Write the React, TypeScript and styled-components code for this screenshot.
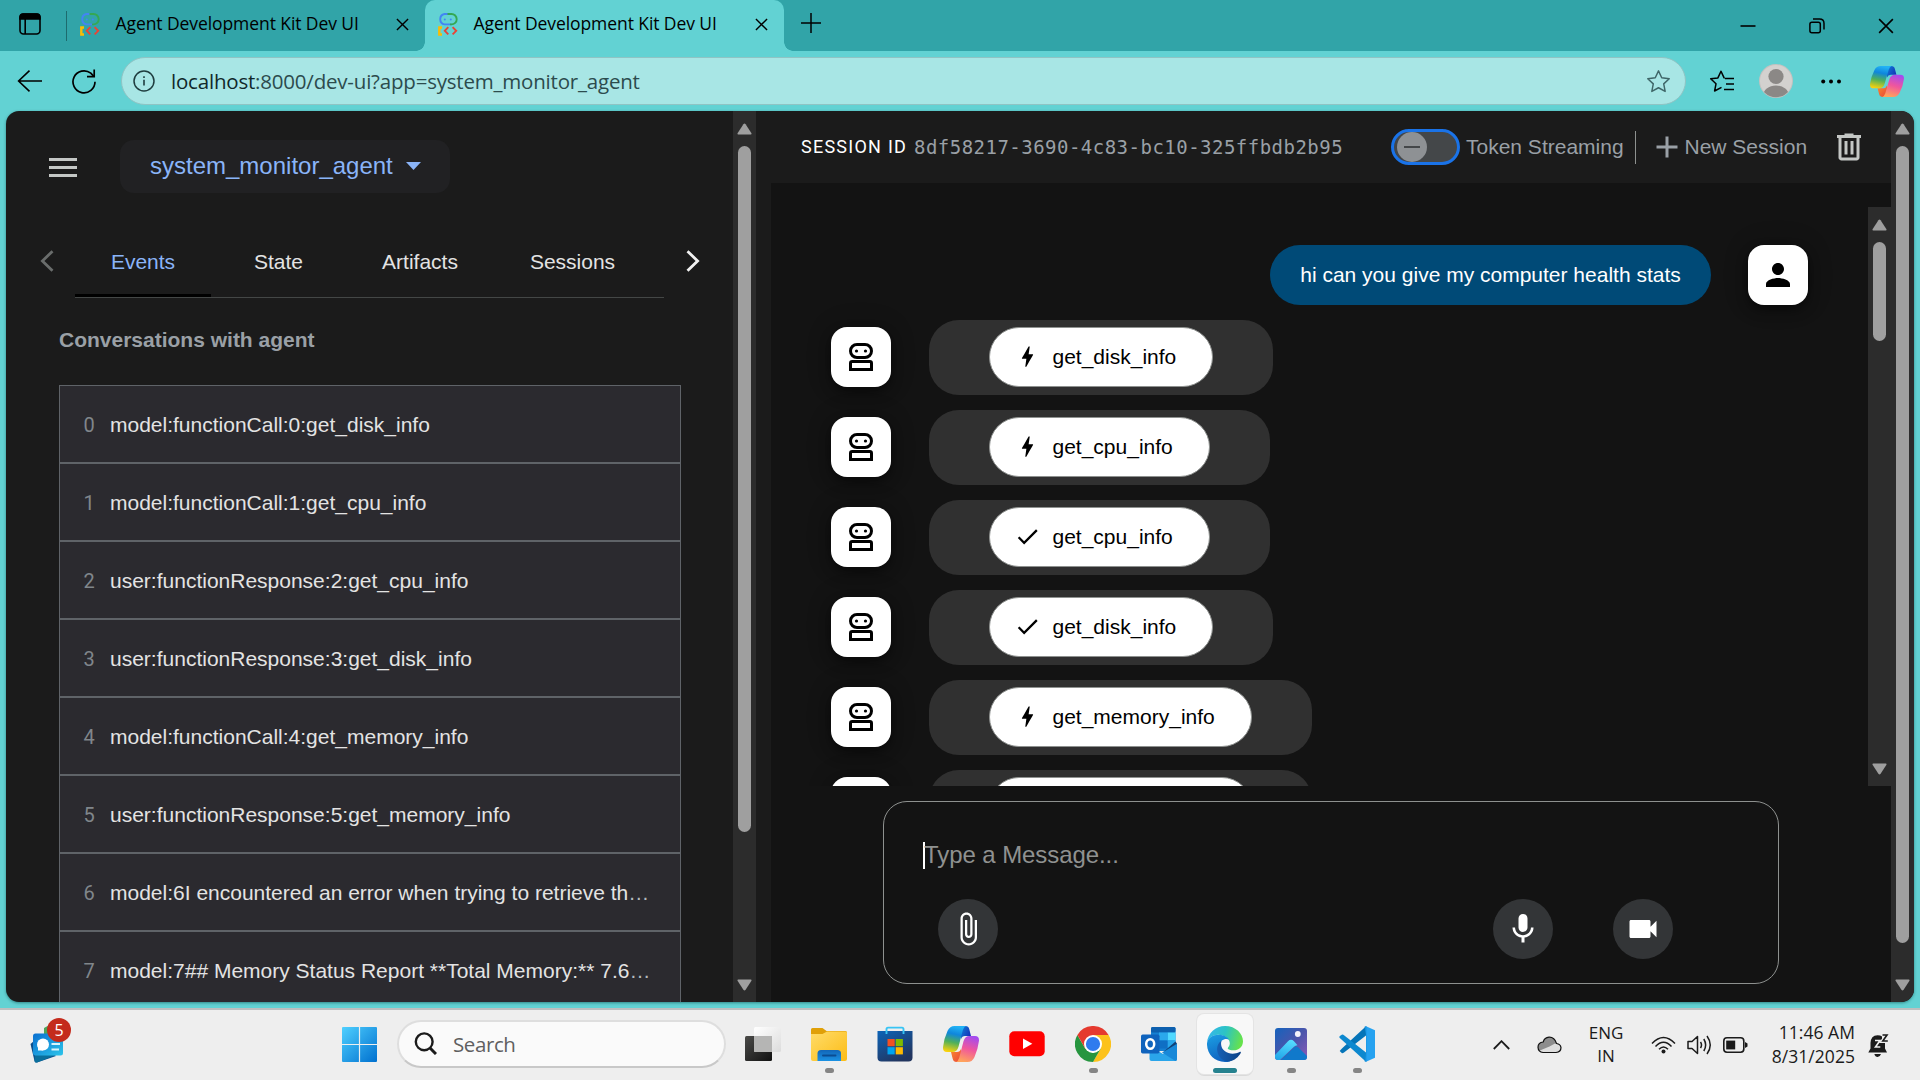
import React from "react";
import styled, { createGlobalStyle, css } from "styled-components";

const ui = `"Segoe UI", "Open Sans", "Noto Sans", sans-serif`;
const arial = `"Liberation Sans", Arial, sans-serif`;

const Global = createGlobalStyle`
  * { box-sizing: border-box; }
  html, body { margin: 0; padding: 0; overflow: hidden; background: #62d2d3; }
  svg { display: block; flex: none; }
`;

const Screen = styled.div`
  width: 1920px;
  height: 1080px;
  display: flex;
  flex-direction: column;
  background: #62d2d3;
  font-family: ${arial};
  overflow: hidden;
  white-space: nowrap;
`;

/* ---------- browser chrome ---------- */

const TabStrip = styled.div`
  height: 51px;
  flex: none;
  display: flex;
  align-items: stretch;
  background: #31a4a8;
  font-family: ${ui};
  color: #0b1a1b;
`;

const TabOverview = styled.div`
  width: 66px;
  padding-left: 19px;
  padding-bottom: 3px;
  display: flex;
  align-items: center;
`;

const StripDivider = styled.div`
  width: 1px;
  height: 30px;
  margin-top: 11px;
  background: #1d6b6e;
`;

const Tab = styled.div<{ $active?: boolean; $width: number }>`
  width: ${(p) => p.$width}px;
  padding: 0 16px 2px 13px;
  display: flex;
  align-items: center;
  position: relative;
  ${(p) =>
    p.$active &&
    css`
      background: #62d2d3;
      border-radius: 10px 10px 0 0;
      &::before,
      &::after {
        content: "";
        position: absolute;
        bottom: 0;
        width: 9px;
        height: 9px;
      }
      &::before {
        left: -9px;
        background: radial-gradient(circle at 0 0, transparent 8.5px, #62d2d3 9px);
      }
      &::after {
        right: -9px;
        background: radial-gradient(circle at 100% 0, transparent 8.5px, #62d2d3 9px);
      }
    `}
`;

const TabTitle = styled.span`
  margin-left: 15.5px;
  flex: 1;
  font-size: 17.5px;
  letter-spacing: -0.08px;
  line-height: 24px;
  color: #000;
  padding-bottom: 3px;
`;

const NewTab = styled.div`
  padding: 0 0 5px 17px;
  display: flex;
  align-items: center;
`;

const WindowControls = styled.div`
  margin-left: auto;
  padding-right: 26px;
  display: flex;
  align-items: center;
  gap: 53px;
`;

const Toolbar = styled.div`
  height: 60px;
  flex: none;
  display: flex;
  align-items: center;
  padding: 0 14px 0 17px;
`;

const Address = styled.div`
  width: 1565px;
  height: 48px;
  flex: none;
  margin-left: 25px;
  margin-right: 23px;
  padding: 0 14px 0 11px;
  display: flex;
  align-items: center;
  border: 1.5px solid #8fc4c4;
  border-radius: 24px;
  background: #a8e6e5;
  font-family: ${ui};
`;

const Url = styled.span`
  margin-left: 16px;
  flex: 1;
  font-size: 20.5px;
  letter-spacing: -0.2px;
  line-height: 28px;
  padding-bottom: 1px;
  color: #2c4b4d;
  b { font-weight: 400; color: #10282a; }
`;

const ToolIcons = styled.div`
  display: flex;
  align-items: center;
  gap: 28px;
  svg:first-child { margin-right: -4px; }
`;

/* ---------- page ---------- */

const Page = styled.div`
  height: 891px;
  flex: none;
  margin: 0 6px;
  display: flex;
  background: #1b1b1b;
  border-radius: 13px;
  overflow: hidden;
  box-shadow: 0 1px 3px rgba(0, 60, 60, 0.5);
`;

const Sidebar = styled.div`
  width: 727px;
  flex: none;
  overflow: hidden;
  display: flex;
  flex-direction: column;
`;

const SideHeader = styled.div`
  display: flex;
  align-items: center;
  padding: 28px 0 0 43px;
  height: 83px;
  flex: none;
  & > svg { margin-top: 2px; }
`;

const AgentSelect = styled.div`
  width: 330px;
  height: 53px;
  margin-left: 43px;
  padding: 0 29px 1px 30px;
  display: flex;
  align-items: center;
  justify-content: space-between;
  border-radius: 14px;
  background: #212123;
  color: #8ab4f8;
  font-size: 24px;
  line-height: 30px;
`;

const TabBar = styled.div`
  height: 72px;
  margin-top: 32px;
  display: flex;
  align-items: stretch;
`;

const Pager = styled.div<{ $left: number }>`
  padding-left: ${(p) => p.$left}px;
  padding-top: 24px;
`;

const TabList = styled.div`
  width: 589px;
  margin-left: 21px;
  display: flex;
  border-bottom: 1px solid #444746;
`;

const SideTab = styled.div<{ $active?: boolean; $width: number }>`
  width: ${(p) => p.$width}px;
  height: 71px;
  padding-top: 3px;
  display: flex;
  align-items: center;
  justify-content: center;
  font-size: 21px;
  color: ${(p) => (p.$active ? "#8ab4f8" : "#e3e3e3")};
  border-bottom: 3px solid ${(p) => (p.$active ? "#000" : "transparent")};
`;

const SideHeading = styled.div`
  margin: 30px 0 0 53px;
  font-size: 21px;
  line-height: 24px;
  font-weight: 700;
  color: #9aa0a6;
`;

const EventList = styled.div`
  width: 622px;
  margin: 33px 0 0 53px;
  flex: none;
`;

const EventRow = styled.div`
  height: 78px;
  display: flex;
  align-items: center;
  padding: 2px 28px 0 23px;
  border: 1px solid #5f6368;
  background: #2b2a2f;
  font-size: 21px;
  line-height: 30px;
`;

const EventIndex = styled.span`
  width: 27px;
  flex: none;
  padding-left: 0.5px;
  font-size: 20px;
  font-family: Roboto, sans-serif;
  color: #80868b;
`;

const EventTitle = styled.span`
  flex: 1;
  color: #b4b9be;
  span { color: #e3e3e3; }
`;

const Scroll = styled.div<{ $height: number }>`
  width: 23px;
  height: ${(p) => p.$height}px;
  flex: none;
  padding: 12px 0 11px;
  display: flex;
  flex-direction: column;
  align-items: center;
  background: #2c2c2c;
`;

const Thumb = styled.div<{ $height: number }>`
  width: 13px;
  height: ${(p) => p.$height}px;
  margin-top: 11px;
  margin-bottom: auto;
  border-radius: 7px;
  background: #9f9f9f;
`;

const Main = styled.div`
  width: 1120px;
  margin-left: 15px;
  flex: none;
  display: flex;
  flex-direction: column;
  background: #131313;
`;

const SessionBar = styled.div`
  height: 72px;
  flex: none;
  display: flex;
  align-items: center;
  padding: 0 24px 0 30px;
  background: #1b1b1b;
  color: #9aa0a6;
  font-size: 21px;
`;

const SessionLabel = styled.span`
  width: 113px;
  font-family: Roboto, sans-serif;
  font-size: 18px;
  font-weight: 400;
  letter-spacing: 1.25px;
  padding-bottom: 1px;
  color: #fff;
`;

const SessionId = styled.span`
  width: 477px;
  font-family: "DejaVu Sans Mono", monospace;
  font-size: 19px;
  letter-spacing: 0.48px;
`;

const Toggle = styled.div`
  width: 69px;
  height: 36px;
  padding: 0 3px;
  display: flex;
  align-items: center;
  border: 3px solid #1a73e8;
  border-radius: 18px;
  background: #444749;
`;

const Knob = styled.div`
  width: 30px;
  height: 30px;
  display: flex;
  align-items: center;
  justify-content: center;
  border-radius: 50%;
  background: #8e9194;
  &::after {
    content: "";
    width: 16px;
    height: 2px;
    background: #444749;
  }
`;

const BarText = styled.span<{ $left: number; $width: number }>`
  margin-left: ${(p) => p.$left}px;
  width: ${(p) => p.$width}px;
`;

const BarDivider = styled.div`
  width: 1px;
  height: 33px;
  margin-right: 12.5px;
  background: #8e918f;
`;

const TrashSlot = styled.div`
  margin-left: 25.5px;
`;

const ChatArea = styled.div`
  height: 579px;
  margin-top: 24px;
  flex: none;
  display: flex;
`;

const Messages = styled.div`
  flex: 1;
  height: 579px;
  overflow: hidden;
  padding: 38px 60px 0;
`;

const UserRow = styled.div`
  display: flex;
  justify-content: flex-end;
  align-items: center;
  margin-bottom: 15px;
`;

const Avatar = styled.div`
  width: 60px;
  height: 60px;
  flex: none;
  display: flex;
  align-items: center;
  justify-content: center;
  border-radius: 16px;
  background: #fff;
  box-shadow: 0 5px 12px rgba(0, 0, 0, 0.45), 0 0 26px rgba(0, 0, 0, 0.18);
`;

const UserBubble = styled.div`
  width: 441px;
  height: 60px;
  margin-right: 37px;
  display: flex;
  align-items: center;
  justify-content: center;
  border-radius: 30px;
  background: #004a77;
  color: #fff;
  font-size: 21px;
`;

const BotRow = styled.div`
  display: flex;
  align-items: flex-start;
  height: 75px;
  margin-bottom: 15px;
  ${Avatar} { margin-top: 7px; }
`;

const BotBubble = styled.div`
  height: 75px;
  margin-left: 38px;
  padding: 7px 60px 0;
  border-radius: 30px;
  background: #303030;
`;

const FnButton = styled.div`
  height: 60px;
  padding: 0 36px 1px 23.5px;
  display: flex;
  align-items: center;
  gap: 12px;
  border: 1px solid #8e918f;
  border-radius: 30px;
  background: #fff;
  color: #000;
  font-size: 21px;
`;

const Composer = styled.div`
  width: 896px;
  height: 183px;
  margin: 15px 0 0 112px;
  padding: 40px 105px 0 39px;
  border: 1px solid #8e918f;
  border-radius: 24px;
`;

const Prompt = styled.div`
  height: 27px;
  padding-bottom: 2px;
  display: flex;
  align-items: center;
  border-left: 2px solid #fff;
  color: #8f9190;
  font-size: 24px;
  line-height: 27px;
  letter-spacing: -0.08px;
  text-indent: -1px;
`;

const Actions = styled.div`
  display: flex;
  margin-top: 30px;
  padding-left: 15px;
`;

const RoundButton = styled.div<{ $push?: boolean }>`
  width: 60px;
  height: 60px;
  margin-left: ${(p) => (p.$push ? "auto" : "0")};
  display: flex;
  align-items: center;
  justify-content: center;
  border-radius: 50%;
  background: #333537;
  & + & + & { margin-left: 60px; }
`;

/* ---------- taskbar ---------- */

const Taskbar = styled.div`
  height: 72px;
  margin-top: 6px;
  display: flex;
  align-items: flex-start;
  background: #eeeeee;
  border-top: 2px solid #bdbfbf;
  font-family: ${ui};
  color: #1b1b1b;
`;

const Widgets = styled.div`
  width: 342px;
  padding: 8px 0 0 30px;
  position: relative;
`;

const Badge = styled.div`
  position: absolute;
  left: 47px;
  top: 8px;
  width: 24px;
  height: 24px;
  border-radius: 50%;
  background: #c42b1c;
  color: #fff;
  font-size: 16px;
  line-height: 24px;
  text-align: center;
`;

const WinLogo = styled.div`
  margin-top: 17px;
  width: 55px;
`;

const SearchBox = styled.div`
  width: 329px;
  height: 48px;
  margin-top: 10px;
  padding: 0 0 1px 15px;
  display: flex;
  align-items: center;
  gap: 16px;
  border: 2px solid #dedede;
  border-bottom-color: #c8c8c8;
  border-radius: 24px;
  background: #fafafa;
  color: #5f5f5f;
  font-size: 20.5px;
  line-height: 28px;
  letter-spacing: -0.4px;
`;

const Apps = styled.div`
  display: flex;
  gap: 10px;
  margin: 4px 0 0 9px;
`;

const AppSlot = styled.div<{ $active?: boolean }>`
  width: 56px;
  height: 60px;
  padding-top: 12px;
  display: flex;
  flex-direction: column;
  align-items: center;
  gap: 6px;
  ${(p) =>
    p.$active &&
    css`
      background: #f8f8f8;
      border-radius: 7px;
      box-shadow: 0 0 0 1px #e4e4e4, 0 2px 0 #dadada;
    `}
`;

const Running = styled.div<{ $active?: boolean }>`
  width: ${(p) => (p.$active ? 24 : 9)}px;
  height: 5px;
  border-radius: 3px;
  background: ${(p) => (p.$active ? "#26828f" : "#858585")};
`;

const Tray = styled.div`
  margin-left: auto;
  height: 70px;
  padding-right: 31px;
  display: flex;
  align-items: center;
  font-size: 17px;
  line-height: 23px;
`;

const Lang = styled.div`
  width: 38px;
  margin: -2px 26px 0 25px;
  text-align: center;
`;

const Clock = styled.div`
  width: 92px;
  margin-top: -3px;
  margin-left: 15px;
  margin-right: 13px;
  text-align: right;
  font-size: 17.5px;
  line-height: 24px;
  letter-spacing: 0.05px;
`;

const Spacer = styled.div<{ $w: number }>`
  width: ${(p) => p.$w}px;
  flex: none;
`;

/* ---------- icons ---------- */

const Mat = ({ d, size = 36, fill = "#000" }: { d: string; size?: number; fill?: string }) => (
  <svg width={size} height={size} viewBox="0 0 24 24" fill={fill}>
    <path d={d} />
  </svg>
);

const P = {
  person: "M12 12c2.21 0 4-1.79 4-4s-1.79-4-4-4-4 1.79-4 4 1.79 4 4 4zm0 2c-2.67 0-8 1.34-8 4v2h16v-2c0-2.66-5.33-4-8-4z",
  bolt: "M11 21h-1l1-7H7.5c-.58 0-.57-.32-.38-.66.19-.34.05-.08.07-.12C8.48 10.94 10.42 7.54 13 3h1l-1 7h3.5c.49 0 .56.33.47.51l-.07.15C12.96 17.55 11 21 11 21z",
  check: "M9 16.17 4.83 12l-1.42 1.41L9 19 21 7l-1.41-1.41z",
  clip: "M16.5 6v11.5c0 2.21-1.79 4-4 4s-4-1.79-4-4V5c0-1.38 1.12-2.5 2.5-2.5s2.5 1.12 2.5 2.5v10.5c0 .55-.45 1-1 1s-1-.45-1-1V6H10v9.5c0 1.38 1.12 2.5 2.5 2.5s2.5-1.12 2.5-2.5V5c0-2.21-1.79-4-4-4S7 2.79 7 5v12.5c0 3.04 2.46 5.5 5.5 5.5s5.5-2.46 5.5-5.5V6h-1.5z",
  mic: "M12 14c1.66 0 3-1.34 3-3V5c0-1.66-1.34-3-3-3S9 3.34 9 5v6c0 1.66 1.34 3 3 3zm5.3-3c0 3-2.54 5.1-5.3 5.1S6.7 14 6.7 11H5c0 3.41 2.72 6.23 6 6.72V21h2v-3.28c3.28-.48 6-3.3 6-6.72h-1.7z",
  video: "M17 10.5V7c0-.55-.45-1-1-1H4c-.55 0-1 .45-1 1v10c0 .55.45 1 1 1h12c.55 0 1-.45 1-1v-3.5l4 4v-11l-4 4z",
  add: "M19 13h-6v6h-2v-6H5v-2h6V5h2v6h6v2z",
  trash: "M7 21q-.825 0-1.412-.587T5 19V6H4V4h5V3h6v1h5v2h-1v13q0 .825-.587 1.413T17 21H7ZM17 6H7v13h10V6ZM9 17h2V8H9v9Zm4 0h2V8h-2v9Z",
};

const Robot = () => (
  <svg width="24" height="28" viewBox="0 0 24 28" fill="none" stroke="#000" strokeWidth="3">
    <rect x="1.5" y="1.5" width="21" height="13" rx="6.5" />
    <circle cx="7.5" cy="8" r="1.6" fill="#000" stroke="none" />
    <circle cx="16.5" cy="8" r="1.6" fill="#000" stroke="none" />
    <path d="M1.5 26.5V20.2Q1.5 18.5 3.2 18.5H20.8Q22.5 18.5 22.5 20.2V26.5Z" />
  </svg>
);

const Favicon = () => (
  <svg width="20" height="23" viewBox="0 0 20 23" fill="none" strokeWidth="1.9">
    <path d="M10 1H6.5A5.3 5.3 0 0 0 6.5 11.4H13.5" stroke="#4285f4" />
    <path d="M9.5 1H13.5A5.2 5.2 0 0 1 13.5 11.4H12" stroke="#34a853" />
    <circle cx="6.8" cy="6.4" r="1" fill="#4285f4" />
    <circle cx="12.8" cy="6.4" r="1" fill="#4285f4" />
    <path d="M4 14.5H1.3V21.5H4" stroke="#fbbc04" strokeWidth="2.4" />
    <path d="M10.3 14.2L6.8 17.8L10.3 21.4M14.6 14.2L18.2 17.8L14.6 21.4" stroke="#ea4335" />
  </svg>
);

const Close = ({ size = 13, w = 1.5 }: { size?: number; w?: number }) => (
  <svg width={size} height={size} viewBox="0 0 14 14" stroke="#000" strokeWidth={w}>
    <path d="M1 1L13 13M13 1L1 13" />
  </svg>
);

const Arrow = ({ down }: { down?: boolean }) => (
  <svg width="15" height="12" viewBox="0 0 15 12" fill="#9f9f9f">
    <path
      d={down
        ? "M1.2 0.5H13.8Q15 0.7 14.3 2L8.6 10.8Q7.5 12.2 6.4 10.8L0.7 2Q0 0.7 1.2 0.5Z"
        : "M1.2 11.5H13.8Q15 11.3 14.3 10L8.6 1.2Q7.5 -0.2 6.4 1.2L0.7 10Q0 11.3 1.2 11.5Z"}
    />
  </svg>
);

const Copilot = ({ id, w, h }: { id: string; w: number; h: number }) => (
  <svg width={w} height={h} viewBox="0 0 36 34" preserveAspectRatio="none">
    <defs>
      <linearGradient id={`${id}a`} x1="0.5" y1="0" x2="0.3" y2="1">
        <stop offset="0" stopColor="#22b2f5" />
        <stop offset="0.3" stopColor="#0f86dc" />
        <stop offset="0.62" stopColor="#4fb05a" />
        <stop offset="1" stopColor="#fbd20c" />
      </linearGradient>
      <linearGradient id={`${id}b`} x1="0.7" y1="0" x2="0.4" y2="1">
        <stop offset="0" stopColor="#a34bf0" />
        <stop offset="0.5" stopColor="#f0569d" />
        <stop offset="1" stopColor="#ffa35c" />
      </linearGradient>
      <linearGradient id={`${id}c`} x1="0" y1="0" x2="1" y2="0.6">
        <stop offset="0" stopColor="#0f86dc" />
        <stop offset="1" stopColor="#1434b8" />
      </linearGradient>
      <linearGradient id={`${id}d`} x1="0" y1="0" x2="1" y2="1">
        <stop offset="0" stopColor="#fb8b2c" />
        <stop offset="1" stopColor="#e8433c" />
      </linearGradient>
    </defs>
    <path d="M17 0H22.5Q25.5 0 26.3 3L28 9.5H22Q19 9.5 18 12.5Z" fill={`url(#${id}c)`} />
    <path d="M19 34H13.5Q10.5 34 9.7 31L8 24.5H14Q17 24.5 18 21.5Z" fill={`url(#${id}d)`} />
    <path d="M11.5 0H23Q20.8 0.8 19.8 4L15.5 19.5Q14 24.5 9.5 24.5H4Q-0.6 24.5 0.1 19.5Q1 12 4.6 4.6Q6.8 0 11.5 0Z" fill={`url(#${id}a)`} />
    <path d="M24.5 34H13Q15.2 33.2 16.2 30L20.5 14.5Q22 9.5 26.5 9.5H32Q36.6 9.5 35.9 14.5Q35 22 31.4 29.4Q29.2 34 24.5 34Z" fill={`url(#${id}b)`} />
  </svg>
);

const starPath = "M12 1.8L15.1 8.4L22.3 9.3L17 14.3L18.4 21.5L12 18L5.6 21.5L7 14.3L1.7 9.3L8.9 8.4Z";

/* ---------- content ---------- */

const events: [string, boolean][] = [
  ["model:functionCall:0:get_disk_info", false],
  ["model:functionCall:1:get_cpu_info", false],
  ["user:functionResponse:2:get_cpu_info", false],
  ["user:functionResponse:3:get_disk_info", false],
  ["model:functionCall:4:get_memory_info", false],
  ["user:functionResponse:5:get_memory_info", false],
  ["model:6I encountered an error when trying to retrieve th", true],
  ["model:7## Memory Status Report **Total Memory:** 7.6", true],
];

const calls: [string, "bolt" | "check"][] = [
  ["get_disk_info", "bolt"],
  ["get_cpu_info", "bolt"],
  ["get_cpu_info", "check"],
  ["get_disk_info", "check"],
  ["get_memory_info", "bolt"],
  ["get_memory_info", "check"],
];

const ScrollBar = ({ height, thumb }: { height: number; thumb: number }) => (
  <Scroll $height={height}>
    <Arrow />
    <Thumb $height={thumb} />
    <Arrow down />
  </Scroll>
);

const BrowserChrome = () => (
  <>
    <TabStrip>
      <TabOverview>
        <svg width="22" height="22" viewBox="0 0 22 22" fill="none" stroke="#000" strokeWidth="1.6">
          <rect x="1" y="1" width="20" height="20" rx="3.5" />
          <path d="M1 6V4Q1 1 4 1H18Q21 1 21 4V6Z" fill="#000" />
          <path d="M6.2 6V21" />
        </svg>
      </TabOverview>
      <StripDivider />
      <Tab $width={358}>
        <Favicon />
        <TabTitle>Agent Development Kit Dev UI</TabTitle>
        <Close />
      </Tab>
      <Tab $active $width={359}>
        <Favicon />
        <TabTitle>Agent Development Kit Dev UI</TabTitle>
        <Close />
      </Tab>
      <NewTab>
        <svg width="20" height="20" viewBox="0 0 20 20" stroke="#000" strokeWidth="1.5">
          <path d="M10 0V20M0 10H20" />
        </svg>
      </NewTab>
      <WindowControls>
        <svg width="16" height="16" viewBox="0 0 16 16" stroke="#000" strokeWidth="1.6"><path d="M0.5 8H15.5" /></svg>
        <svg width="16" height="16" viewBox="0 0 16 16" fill="none" stroke="#000" strokeWidth="1.5">
          <rect x="0.9" y="4.3" width="10.4" height="10.4" rx="2" />
          <path d="M4 1H10.5Q15 1 15 5.5V11.5" />
        </svg>
        <Close size={16} w={1.4} />
      </WindowControls>
    </TabStrip>
    <Toolbar>
      <svg width="26" height="22" viewBox="0 0 26 22" fill="none" stroke="#000" strokeWidth="1.6">
        <path d="M12.5 0.7L1.6 11L12.5 21.3M1.6 11H25" />
      </svg>
      <Spacer $w={29} />
      <svg width="24" height="25" viewBox="0 0 24 25" fill="none" stroke="#000" strokeWidth="1.7">
        <path d="M23 12.8A11 11 0 1 1 18.8 4.2L21.8 7.4" />
        <path d="M22.2 0.5V7.6H15" />
      </svg>
      <Address>
        <svg width="22" height="22" viewBox="0 0 22 22" fill="none" stroke="#1f3d3f" strokeWidth="1.5">
          <circle cx="11" cy="11" r="10" />
          <path d="M11 9.7V15.5M11 6.2V8" strokeWidth="1.6" />
        </svg>
        <Url><b>localhost</b>:8000/dev-ui?app=system_monitor_agent</Url>
        <svg width="25" height="25" viewBox="0 0 24 24" fill="none" stroke="#3f6668" strokeWidth="1.4" strokeLinejoin="round">
          <path d={starPath} />
        </svg>
      </Address>
      <ToolIcons>
        <svg width="26" height="25" viewBox="0 0 26 24" fill="none" stroke="#000" strokeWidth="1.5" strokeLinejoin="round">
          <path d="M14.8 8.4H15.1L12 1.8L8.9 8.4L1.7 9.3L7 14.3L5.6 21.5L12.5 17.8" />
          <path d="M16 9H25M17 14.5H25M15 20H25" />
        </svg>
        <svg width="34" height="34" viewBox="0 0 34 34">
          <defs><clipPath id="av"><circle cx="17" cy="17" r="16.2" /></clipPath></defs>
          <circle cx="17" cy="17" r="17" fill="#c4c2c0" />
          <circle cx="17" cy="17" r="16" fill="#d3d1cf" />
          <g clipPath="url(#av)" fill="#8b8886">
            <circle cx="17" cy="12.5" r="7.6" />
            <ellipse cx="17" cy="32" rx="13" ry="10.5" />
          </g>
        </svg>
        <svg width="21" height="5" viewBox="0 0 21 5"><circle cx="2.2" cy="2.5" r="2" /><circle cx="10" cy="2.5" r="2" /><circle cx="18" cy="2.5" r="2" /></svg>
        <Copilot id="cpt" w={34} h={31} />
      </ToolIcons>
    </Toolbar>
  </>
);

const SidePanel = () => (
  <Sidebar>
    <SideHeader>
      <svg width="28" height="19" viewBox="0 0 28 19" fill="#c4c7c5">
        <rect y="0" width="28" height="3" /><rect y="8" width="28" height="3" /><rect y="16" width="28" height="3" />
      </svg>
      <AgentSelect>
        <span>system_monitor_agent</span>
        <svg width="15" height="8" viewBox="0 0 15 8" fill="#8ab4f8"><path d="M0 0H15L7.5 8Z" /></svg>
      </AgentSelect>
    </SideHeader>
    <TabBar>
      <Pager $left={34}>
        <svg width="14" height="22" viewBox="0 0 14 22" fill="none" stroke="#6a6d6c" strokeWidth="2.8"><path d="M12.5 1.2L2.4 11L12.5 20.8" /></svg>
      </Pager>
      <TabList>
        <SideTab $active $width={136}>Events</SideTab>
        <SideTab $width={135}>State</SideTab>
        <SideTab $width={148}>Artifacts</SideTab>
        <SideTab $width={157}>Sessions</SideTab>
      </TabList>
      <Pager $left={22}>
        <svg width="14" height="22" viewBox="0 0 14 22" fill="none" stroke="#f1f1f1" strokeWidth="2.8"><path d="M1.5 1.2L11.6 11L1.5 20.8" /></svg>
      </Pager>
    </TabBar>
    <SideHeading>Conversations with agent</SideHeading>
    <EventList>
      {events.map(([title, cut], i) => (
        <EventRow key={i}>
          <EventIndex>{i}</EventIndex>
          <EventTitle><span>{title}</span>{cut && "…"}</EventTitle>
        </EventRow>
      ))}
    </EventList>
  </Sidebar>
);

const Chat = () => (
  <Main>
    <SessionBar>
      <SessionLabel>SESSION ID</SessionLabel>
      <SessionId>8df58217-3690-4c83-bc10-325ffbdb2b95</SessionId>
      <Toggle><Knob /></Toggle>
      <BarText $left={6} $width={169}>Token Streaming</BarText>
      <BarDivider />
      <Mat d={P.add} fill="#9aa0a6" />
      <BarText $left={0} $width={121}>New Session</BarText>
      <TrashSlot><Mat d={P.trash} fill="#c4c7c5" /></TrashSlot>
    </SessionBar>
    <ChatArea>
      <Messages>
        <UserRow>
          <UserBubble>hi can you give my computer health stats</UserBubble>
          <Avatar><Mat d={P.person} /></Avatar>
        </UserRow>
        {calls.map(([name, icon], i) => (
          <BotRow key={i}>
            <Avatar><Robot /></Avatar>
            <BotBubble>
              <FnButton><Mat d={P[icon]} size={27} />{name}</FnButton>
            </BotBubble>
          </BotRow>
        ))}
      </Messages>
      <ScrollBar height={579} thumb={99} />
    </ChatArea>
    <Composer>
      <Prompt>Type a Message...</Prompt>
      <Actions>
        <RoundButton><Mat d={P.clip} fill="#fff" /></RoundButton>
        <RoundButton $push><Mat d={P.mic} fill="#fff" /></RoundButton>
        <RoundButton><Mat d={P.video} fill="#fff" /></RoundButton>
      </Actions>
    </Composer>
  </Main>
);

/* ---------- taskbar icons ---------- */

const TaskView = () => (
  <svg width="36" height="36" viewBox="0 0 36 36">
    <defs>
      <linearGradient id="tv1" x1="0" y1="0" x2="1" y2="1"><stop offset="0" stopColor="#4a4a48" /><stop offset="1" stopColor="#111" /></linearGradient>
      <linearGradient id="tv2" x1="0" y1="0" x2="1" y2="1"><stop offset="0" stopColor="#fff" /><stop offset="1" stopColor="#dcdcdc" /></linearGradient>
    </defs>
    <rect x="0" y="10" width="27" height="25" rx="1.5" fill="url(#tv1)" />
    <rect x="9" y="1" width="27" height="25" rx="1.5" fill="url(#tv2)" />
    <path d="M9 10H27V26H10.5Q9 26 9 24.5Z" fill="#b5b5b4" />
  </svg>
);

const Folder = () => (
  <svg width="36" height="36" viewBox="0 0 36 36">
    <defs>
      <linearGradient id="fo1" x1="0" y1="0" x2="1" y2="1"><stop offset="0" stopColor="#ffdc6a" /><stop offset="1" stopColor="#fcbc15" /></linearGradient>
      <linearGradient id="fo2" x1="0" y1="0" x2="0" y2="1"><stop offset="0" stopColor="#1266b8" /><stop offset="1" stopColor="#1b92e4" /></linearGradient>
    </defs>
    <path d="M0 3.5Q0 2 1.5 2H11.5L15.5 5H34.5Q36 5 36 6.5V12H0Z" fill="#e0a008" />
    <path d="M0 8H11.5L16 5.5H34.5Q36 5.5 36 7V33Q36 35 34 35H2Q0 35 0 33Z" fill="url(#fo1)" />
    <path d="M6.5 35V27.5Q6.5 24 10 24H26.5Q30 24 30 27.5V35Z" fill="url(#fo2)" />
    <rect x="11" y="28.5" width="14.5" height="2" rx="1" fill="#0b4c92" />
  </svg>
);

const Store = () => (
  <svg width="36" height="36" viewBox="0 0 36 36">
    <defs><linearGradient id="st1" x1="0" y1="0" x2="0.6" y2="1"><stop offset="0" stopColor="#0c64b8" /><stop offset="1" stopColor="#22355f" /></linearGradient></defs>
    <path d="M0.5 5H35.5V31.5Q35.5 35.5 31.5 35.5H4.5Q0.5 35.5 0.5 31.5Z" fill="url(#st1)" />
    <path d="M9.5 8V3.2Q9.5 1.6 11 1.6H25Q26.5 1.6 26.5 3.2V8" fill="none" stroke="#38c4f4" strokeWidth="1.9" />
    <rect x="10.5" y="13" width="7.2" height="7.2" fill="#f25022" /><rect x="18.7" y="13" width="7.2" height="7.2" fill="#7fba00" />
    <rect x="10.5" y="21.2" width="7.2" height="7.2" fill="#00a4ef" /><rect x="18.7" y="21.2" width="7.2" height="7.2" fill="#ffb900" />
  </svg>
);

const YouTube = () => (
  <svg width="36" height="36" viewBox="0 0 36 36">
    <rect x="0.3" y="5.3" width="35.4" height="25" rx="5" fill="#f00" />
    <path d="M14 12.5L23.3 17.8L14 23.1Z" fill="#fff" />
  </svg>
);

const Chrome = () => (
  <svg width="36" height="36" viewBox="0 0 36 36">
    <path d="M18 18L2.4 9A18 18 0 0 1 33.6 9Z" fill="#e53a2f" />
    <path d="M18 9H33.6A18 18 0 0 1 18 36L25.8 22.5Z" fill="#fcc21b" />
    <path d="M2.4 9L10.2 22.5L18 27L25.8 22.5L18 36A18 18 0 0 1 2.4 9Z" fill="#26953f" />
    <path d="M2.4 9H18V18L10.2 22.5Z" fill="#e53a2f" />
    <circle cx="18" cy="18" r="9" fill="#fff" />
    <circle cx="18" cy="18" r="7.1" fill="#2f7bee" />
  </svg>
);

const Outlook = () => (
  <svg width="36" height="36" viewBox="0 0 36 36">
    <rect x="10" y="1" width="24.5" height="24" rx="1.5" fill="#1580d2" />
    <rect x="10" y="1" width="24.5" height="5.5" rx="1.5" fill="#0d5fae" />
    <rect x="26.5" y="6.5" width="8" height="8" fill="#50d9ff" /><rect x="18" y="6.5" width="8.5" height="8" fill="#2aa8ec" />
    <rect x="26.5" y="14.5" width="8" height="8" fill="#2aa8ec" /><rect x="18" y="14.5" width="8.5" height="8" fill="#0f6fc4" />
    <path d="M36 17.5V33Q36 35 34 35H10.5Q8.5 35 8.5 33V20L22 28Z" fill="#2aa5ea" />
    <path d="M36 17.5L21 26.5L34.5 35Q36 34.8 36 33Z" fill="#1888d8" />
    <path d="M34.5 15.5L36 17.8L22.3 26Z" fill="#103f75" />
    <rect x="0" y="8.5" width="18.5" height="19" rx="1.7" fill="#0f63bd" />
    <ellipse cx="9.2" cy="18" rx="4" ry="4.8" fill="none" stroke="#fff" strokeWidth="2.5" />
  </svg>
);

const Edge = () => (
  <svg width="36" height="36" viewBox="0 0 256 256">
    <defs>
      <linearGradient id="ed1" x1="0" y1="0.2" x2="1" y2="0.4"><stop offset="0" stopColor="#35b6ee" /><stop offset="0.5" stopColor="#2cc3c4" /><stop offset="1" stopColor="#66e24c" /></linearGradient>
      <linearGradient id="ed2" x1="0.2" y1="0" x2="0.5" y2="1"><stop offset="0" stopColor="#1b9de2" /><stop offset="1" stopColor="#0f62c0" /></linearGradient>
      <linearGradient id="ed3" x1="0" y1="0.5" x2="1" y2="0.5"><stop offset="0" stopColor="#1660b5" /><stop offset="1" stopColor="#0c4286" /></linearGradient>
    </defs>
    <path d="M0 122C4 50 62 0 128 0C206 0 256 56 256 108C256 150 222 173 190 173C166 173 150 167 148 160C146 153 162 145 162 122C162 88 122 62 80 62C36 62 4 92 0 122Z" fill="url(#ed1)" />
    <path d="M0 122C6 84 40 62 82 62C118 62 146 78 158 98C148 92 134 91 120 96C92 106 82 138 92 172C102 210 138 240 166 250C152 256 140 256 128 256C50 256 -3 196 0 122Z" fill="url(#ed2)" />
    <path d="M104 105C80 118 66 150 74 184C84 228 122 254 160 251C196 246 224 220 240 192C243 186 238 182 232 185C216 193 200 197 182 197C142 197 106 172 101 137C99 124 100 112 104 105Z" fill="url(#ed3)" />
  </svg>
);

const Photos = () => (
  <svg width="36" height="36" viewBox="0 0 36 36">
    <defs>
      <linearGradient id="ph1" x1="0" y1="0" x2="1" y2="1"><stop offset="0" stopColor="#1563bd" /><stop offset="0.5" stopColor="#4a55ab" /><stop offset="1" stopColor="#8d5ab8" /></linearGradient>
      <linearGradient id="ph2" x1="0.6" y1="0" x2="0.3" y2="1"><stop offset="0" stopColor="#55dcff" /><stop offset="1" stopColor="#22a6e8" /></linearGradient>
      <clipPath id="ph"><rect x="2" y="2" width="32" height="32" rx="3" /></clipPath>
    </defs>
    <g clipPath="url(#ph)">
      <rect x="2" y="2" width="32" height="32" fill="url(#ph1)" />
      <path d="M8 34L21 21.5Q23.2 19.5 25.4 21.5L36 32V36H8Z" fill="#1079cb" />
      <path d="M2 29L15 15.3Q18 12.4 21 15.3L24.5 19.3Q22.6 19.2 21 20.8L7 34H2Z" fill="url(#ph2)" />
      <circle cx="24.8" cy="8" r="2.9" fill="#f4f2fa" />
    </g>
  </svg>
);

const VsCode = () => (
  <svg width="36" height="36" viewBox="0 0 36 36">
    <path d="M27 0.3L36 4.3V31.7L27 35.7Z" fill="#26a2f0" />
    <path d="M27 9.5V0.3L3.2 22.2Q1.6 23.6 0.7 25L3 27.3Q4 27.4 5 26.6Z" fill="#0574b8" />
    <path d="M27 26.5V35.7L0.8 12Q-0.2 10.8 0.9 9.9L2.8 8.7Q4 8.2 5 9.3Z" fill="#0d88cf" />
    <path d="M25.5 0.8L27.4 0L27.4 36L25.5 35.2L27 27V9Z" fill="#1490dc" />
  </svg>
);

const apps: [React.FC, "none" | "running" | "active"][] = [
  [TaskView, "none"],
  [Folder, "running"],
  [Store, "none"],
  [() => <Copilot id="tbc" w={36} h={36} />, "none"],
  [YouTube, "none"],
  [Chrome, "running"],
  [Outlook, "none"],
  [Edge, "active"],
  [Photos, "running"],
  [VsCode, "running"],
];

const WinTaskbar = () => (
  <Taskbar>
    <Widgets>
      <svg width="36" height="46" viewBox="0 0 36 46">
        <defs><linearGradient id="wg" x1="0" y1="0" x2="1" y2="1"><stop offset="0" stopColor="#0a6fd0" /><stop offset="1" stopColor="#2cc4ea" /></linearGradient></defs>
        <path d="M14 10Q22 4 30 10V18H14Z" fill="#4da65a" />
        <path d="M0.5 26L4 23L26 38L7 44.5Q5 45 4.5 43Z" fill="#0d4f8c" />
        <path d="M5 37H26L7 44.5Q5 45 4.5 43Z" fill="#0a6f9c" />
        <rect x="3" y="15.5" width="30" height="22" rx="2.5" fill="url(#wg)" />
        <circle cx="13" cy="26.5" r="6" fill="#fff" /><path d="M8 32.5V27H13V32.5Z" fill="#fff" />
        <path d="M21.5 26H30M21.5 31.5H29" stroke="#d9f5fb" strokeWidth="2" />
      </svg>
      <Badge>5</Badge>
    </Widgets>
    <WinLogo>
      <svg width="35" height="35" viewBox="0 0 35 35">
        <defs><linearGradient id="wl" gradientUnits="userSpaceOnUse" x1="0" y1="0" x2="35" y2="35"><stop offset="0" stopColor="#4fd0ff" /><stop offset="1" stopColor="#0070cf" /></linearGradient></defs>
        <path d="M1 0H16.9V16.9H0V1Q0 0 1 0ZM18.1 0H34Q35 0 35 1V16.9H18.1ZM0 18.1H16.9V35H1Q0 35 0 34ZM18.1 18.1H35V34Q35 35 34 35H18.1Z" fill="url(#wl)" />
      </svg>
    </WinLogo>
    <SearchBox>
      <svg width="23" height="23" viewBox="0 0 23 23" fill="none" stroke="#1b1b1b" strokeWidth="2.4">
        <circle cx="10.2" cy="9.8" r="8.4" /><path d="M16 16L22 22" strokeWidth="3" />
      </svg>
      Search
    </SearchBox>
    <Apps>
      {apps.map(([Icon, state], i) => (
        <AppSlot key={i} $active={state === "active"}>
          <Icon />
          {state !== "none" && <Running $active={state === "active"} />}
        </AppSlot>
      ))}
    </Apps>
    <Tray>
      <svg width="17" height="10" viewBox="0 0 17 10" fill="none" stroke="#1b1b1b" strokeWidth="1.8"><path d="M0.8 9L8.5 1.2L16.2 9" /></svg>
      <Spacer $w={27} />
      <svg width="25" height="18" viewBox="0 0 25 18">
        <path d="M6 16.5H19Q24 16 24 11.5Q23.5 8 19.5 7.5Q17.5 1 12 1.2Q7.5 1.5 6.2 6Q1 6.5 1 11.3Q1.2 16 6 16.5Z" fill="#8d8d8d" />
        <path d="M12.5 10.5L18 7.5Q23.5 7.8 23.9 11.8Q23.5 16.3 19 16.5H6Q3.5 16.5 2.3 14.8Z" fill="#dedede" />
        <path d="M6 16.5H19Q24 16 24 11.5Q23.5 8 19.5 7.5Q17.5 1 12 1.2Q7.5 1.5 6.2 6Q1 6.5 1 11.3Q1.2 16 6 16.5Z" fill="none" stroke="#111" strokeWidth="1.2" />
      </svg>
      <Lang>ENG<br />IN</Lang>
      <svg width="25" height="18" viewBox="0 0 25 18" fill="none" stroke="#1b1b1b" strokeWidth="1.5">
        <path d="M1 7.5Q12.5 -4.5 24 7.5M4.5 10.5Q12.5 2 20.5 10.5M8 13.3Q12.5 8.8 17 13.3" /><circle cx="12.5" cy="15.5" r="2" fill="#1b1b1b" stroke="none" />
      </svg>
      <Spacer $w={11} />
      <svg width="26" height="20" viewBox="0 0 26 20" fill="none" stroke="#1b1b1b" strokeWidth="1.5">
        <path d="M1 6.5H5L10.5 1.5V18.5L5 13.5H1Z" strokeLinejoin="round" /><path d="M13.5 7Q15.5 10 13.5 13M16.8 4Q20.5 10 16.8 16M20 1Q26.5 10 20 19" />
      </svg>
      <Spacer $w={10} />
      <svg width="25" height="16" viewBox="0 0 25 16" fill="none" stroke="#1b1b1b" strokeWidth="1.6">
        <rect x="0.8" y="0.8" width="20" height="14.4" rx="3.2" /><rect x="3.2" y="3.6" width="9" height="8.8" fill="#1b1b1b" stroke="none" /><path d="M22 5V11L24.5 9.5V6.5Z" fill="#1b1b1b" stroke="none" />
      </svg>
      <Clock>11:46 AM<br />8/31/2025</Clock>
      <svg width="21" height="23" viewBox="0 0 21 23" fill="#1b1b1b">
        <path d="M2.5 9Q2.8 1.5 9.5 1.2Q12.5 1.2 14 2.5V8H17V14.5L19 18.5H0.3L2.5 14.5Z" />
        <path d="M6.3 20H13Q12 23 9.6 23Q7.2 23 6.3 20Z" />
        <path d="M7 6.5H12L7.5 13H12.3" fill="none" stroke="#eee" strokeWidth="1.6" />
        <path d="M14.5 1H19L14.8 7H19.8" fill="none" stroke="#eee" strokeWidth="4" />
        <path d="M14.5 1H19L14.8 7H19.8" fill="none" stroke="#1b1b1b" strokeWidth="1.6" />
      </svg>
    </Tray>
  </Taskbar>
);

export default function App() {
  return (
    <Screen>
      <Global />
      <BrowserChrome />
      <Page>
        <SidePanel />
        <ScrollBar height={891} thumb={686} />
        <Chat />
        <ScrollBar height={891} thumb={797} />
      </Page>
      <WinTaskbar />
    </Screen>
  );
}
